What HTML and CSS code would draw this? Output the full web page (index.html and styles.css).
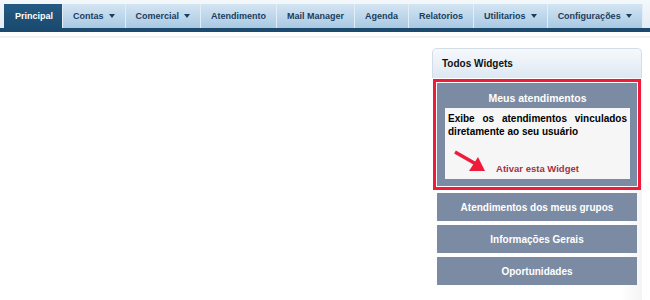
FILE: index.html
```html
<!DOCTYPE html>
<html>
  <head>
    <meta charset="UTF-8" />
    <title>Widgets</title>
    <link rel="stylesheet" href="styles.css">
  </head>
  <body>
    <!-- Top menu -->
    <div id="menu">
      <div class="tab active">Principal</div>
      <div class="tab">Contas <span class="caret"></span></div>
      <div class="tab">Comercial <span class="caret"></span></div>
      <div class="tab">Atendimento</div>
      <div class="tab">Mail Manager</div>
      <div class="tab">Agenda</div>
      <div class="tab">Relatorios</div>
      <div class="tab">Utilitarios <span class="caret"></span></div>
      <div class="tab">Configurações <span class="caret"></span></div>
    </div>
    <div id="menu-rule"></div>

    <div id="main">
      <div id="content"></div>

      <!-- Widgets panel -->
      <div id="widgets">
        <div class="widgets-header">Todos Widgets</div>
        <div class="widgets-body">
          <div class="widget open highlighted">
            <div class="widget-title">Meus atendimentos</div>
            <div class="widget-info">
              <div class="widget-desc">Exibe os atendimentos vinculados diretamente ao seu usuário</div>
              <div class="widget-action">Ativar esta Widget</div>
              <svg class="pointer" width="34" height="24" viewBox="0 0 34 24">
                <line x1="2" y1="2" x2="23" y2="14" stroke="#ee1c3a" stroke-width="3.5" />
                <polygon points="32,21 16,21 25,7" fill="#ee1c3a" />
              </svg>
            </div>
          </div>
          <div class="widget">Atendimentos dos meus grupos</div>
          <div class="widget">Informações Gerais</div>
          <div class="widget">Oportunidades</div>
        </div>
      </div>
    </div>
  </body>
</html>
```

FILE: styles.css
```css
body {
  margin: 0;
  padding: 0;
  background-color: #ffffff;
  font-family: 'Liberation Sans', Arial, sans-serif;
}

/* Top menu */
#menu {
  display: flex;
  padding: 4px 0 0 4px;
  background: linear-gradient(#f4f8fb, #e4edf5);
  border-bottom: 4px solid #1c4a6e;
}

.tab {
  display: flex;
  align-items: center;
  gap: 5px;
  height: 24px;
  padding: 0 10px;
  border-right: 1px solid #e3edf6;
  background: linear-gradient(#d3e5f3, #a9c9e2);
  color: #1b3d5e;
  font-size: 9px;
  font-weight: bold;
  white-space: nowrap;
}

.tab.active {
  background: linear-gradient(#245b85, #1a4a6f);
  color: #ffffff;
  padding: 0 9px 0 11px;
}

.caret {
  width: 0;
  height: 0;
  border-left: 3px solid transparent;
  border-right: 3px solid transparent;
  border-top: 4px solid #1b3d5e;
}

#menu-rule {
  height: 2px;
  margin-top: 4px;
  background: linear-gradient(#eeeeee, #f6f6f6);
}

#main {
  display: flex;
  justify-content: space-between;
  padding: 10px 8px 0 0;
}

#content {
  flex-grow: 1;
}

/* Widgets panel */
#widgets {
  width: 208px;
  border: 1px solid #d3dde8;
  border-bottom: none;
  border-radius: 5px 5px 0 0;
  background: linear-gradient(#f8f9fa, #ffffff 75%);
}

.widgets-header {
  height: 29px;
  padding-left: 9px;
  display: flex;
  align-items: center;
  border-radius: 5px 5px 0 0;
  background: linear-gradient(#f6f9fc, #dde8f3);
  color: #111111;
  font-size: 10px;
  font-weight: bold;
}

.widgets-body {
  display: flex;
  flex-direction: column;
  gap: 4px;
  margin: 0 -1px;
  padding: 5px 5px 20px 5px;
  background: linear-gradient(90deg, #ffffff, #ffffff 90%, #f4f4f4);
}

.widget {
  height: 28px;
  display: flex;
  align-items: center;
  justify-content: center;
  background-color: #7b8ba3;
  color: #ffffff;
  font-size: 10px;
  font-weight: bold;
}

.widget.open {
  height: auto;
  display: block;
  padding: 0 7px 7px 8px;
  margin-bottom: 3px;
}

.widget.highlighted {
  outline: 3px solid #ee1c3a;
  outline-offset: 1px;
}

.widget-title {
  padding: 9px 0 4px;
  line-height: 12px;
  font-size: 10.5px;
  text-align: center;
}

.widget-info {
  position: relative;
  padding: 4px 3px 4px 3px;
  background-color: #f6f6f6;
  color: #000000;
}

.widget-desc {
  font-size: 10px;
  line-height: 13px;
  text-align: justify;
}

.widget-action {
  margin-top: 25px;
  line-height: 12px;
  font-size: 9.5px;
  color: #a23344;
  text-align: center;
}

/* Red arrow pointing at the action */
.pointer {
  position: absolute;
  left: 8px;
  top: 42px;
}
```
